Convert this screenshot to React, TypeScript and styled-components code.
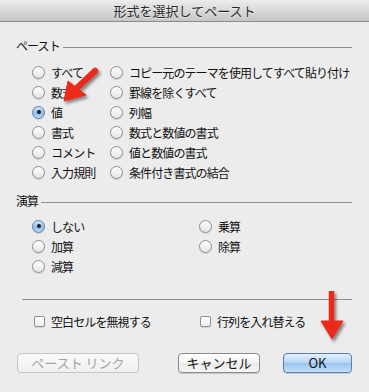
import React from 'react';
import styled, { createGlobalStyle } from 'styled-components';

const GlobalStyle = createGlobalStyle`
  html, body {
    margin: 0;
    padding: 0;
    background: #ececec;
  }
  body {
    font-family: "Noto Sans CJK JP", "Liberation Sans", sans-serif;
    color: #111;
  }
`;

interface Choice {
  label: string;
  checked?: boolean;
}

const pasteLeft: Choice[] = [
  { label: 'すべて' },
  { label: '数式' },
  { label: '値', checked: true },
  { label: '書式' },
  { label: 'コメント' },
  { label: '入力規則' },
];

const pasteRight: Choice[] = [
  { label: 'コピー元のテーマを使用してすべて貼り付け' },
  { label: '罫線を除くすべて' },
  { label: '列幅' },
  { label: '数式と数値の書式' },
  { label: '値と数値の書式' },
  { label: '条件付き書式の結合' },
];

const opsLeft: Choice[] = [
  { label: 'しない', checked: true },
  { label: '加算' },
  { label: '減算' },
];

const opsRight: Choice[] = [{ label: '乗算' }, { label: '除算' }];

const Window = styled.div`
  position: relative;
  width: 369px;
  height: 392px;
  overflow: hidden;
  background: #ececec;
`;

const TitleBar = styled.div`
  height: 21px;
  line-height: 21px;
  text-align: center;
  font-size: 13px;
  color: #2a2a2a;
  background: linear-gradient(#ececec, #c6c6c6);
  border-bottom: 1px solid #8c8c8c;
  text-shadow: 0 1px 0 rgba(255, 255, 255, 0.5);
`;

const Body = styled.div`
  padding: 16px 17px 0 16px;
  display: flex;
  flex-direction: column;
`;

const SectionHeader = styled.div<{ $gap?: number }>`
  display: flex;
  align-items: center;
  height: 14px;
  font-size: 12px;
  letter-spacing: -0.9px;
  margin-top: ${({ $gap }) => $gap ?? 0}px;
`;

const Rule = styled.div`
  flex: 1;
  height: 1px;
  background: #8f8f8f;
  margin: 5px 0 0 3px;
`;

const OptionGrid = styled.div<{ $left: number; $gap: number }>`
  display: grid;
  grid-template-columns: ${({ $left }) => $left}px 1fr;
  margin: ${({ $gap }) => $gap}px 0 0 16px;
`;

const Column = styled.div`
  display: flex;
  flex-direction: column;
`;

const Row = styled.label`
  display: flex;
  align-items: center;
  height: 20px;
  gap: 6px;
  font-size: 12px;
  letter-spacing: -0.9px;
  white-space: nowrap;
`;

const RadioDot = styled.span<{ $checked?: boolean }>`
  position: relative;
  width: 13px;
  height: 13px;
  flex: none;
  box-sizing: border-box;
  border-radius: 50%;
  border: 1px solid ${({ $checked }) => ($checked ? '#5d7ea8' : '#8e8e8e')};
  background: ${({ $checked }) =>
    $checked
      ? 'linear-gradient(#d5e6f8, #8ebbee 55%, #b8d6f6)'
      : 'linear-gradient(#ffffff, #f1f1f1 50%, #e4e4e4)'};
  box-shadow: 0 1px 1px rgba(0, 0, 0, 0.12);
  &::after {
    content: '';
    display: ${({ $checked }) => ($checked ? 'block' : 'none')};
    position: absolute;
    left: 3.5px;
    top: 3.5px;
    width: 4px;
    height: 4px;
    border-radius: 50%;
    background: #1a1a1a;
  }
`;

const CheckBox = styled.span`
  width: 11px;
  height: 11px;
  flex: none;
  box-sizing: border-box;
  border-radius: 2px;
  border: 1px solid #8e8e8e;
  background: linear-gradient(#ffffff, #ececec);
  box-shadow: 0 1px 1px rgba(0, 0, 0, 0.1);
`;

const Separator = styled.div`
  height: 1px;
  background: #8f8f8f;
  margin: 23px 0 0 6px;
`;

const CheckRow = styled.div`
  display: grid;
  grid-template-columns: 166px 1fr;
  margin: 11px 0 0 18px;
`;

const ButtonRow = styled.div`
  display: flex;
  align-items: center;
  margin-top: 22px;
  padding-left: 1px;
`;

const ButtonGroup = styled.div`
  display: flex;
  gap: 23px;
  margin-left: auto;
`;

const Button = styled.button<{ $width: number; $variant?: 'default' | 'primary' | 'disabled' }>`
  width: ${({ $width }) => $width}px;
  height: 20px;
  padding: 0;
  font-family: "Noto Sans CJK JP", "Liberation Sans", sans-serif;
  font-size: 13px;
  line-height: 18px;
  border-radius: 4px;
  box-sizing: border-box;
  color: ${({ $variant }) => ($variant === 'disabled' ? '#a3a3a3' : '#111')};
  border: 1px solid
    ${({ $variant }) =>
      $variant === 'primary' ? '#5a7db0' : $variant === 'disabled' ? '#c4c4c4' : '#8a8a8a'};
  background: ${({ $variant }) =>
    $variant === 'primary'
      ? 'linear-gradient(#e3effc, #b4d4f6 50%, #97c2f0 51%, #c6e0fb)'
      : $variant === 'disabled'
      ? 'linear-gradient(#fafafa, #f0f0f0)'
      : 'linear-gradient(#ffffff, #f3f3f3 50%, #e9e9e9 51%, #f7f7f7)'};
  box-shadow: ${({ $variant }) =>
    $variant === 'disabled' ? 'none' : '0 1px 1px rgba(0, 0, 0, 0.15)'};
`;

const Overlay = styled.svg`
  position: absolute;
  left: 0;
  top: 0;
  pointer-events: none;
`;

const RadioList: React.FC<{ items: Choice[] }> = ({ items }) => (
  <Column>
    {items.map((item) => (
      <Row key={item.label}>
        <RadioDot $checked={item.checked} />
        {item.label}
      </Row>
    ))}
  </Column>
);

const App: React.FC = () => {
  return (
    <Window>
      <GlobalStyle />
      <TitleBar>形式を選択してペースト</TitleBar>
      <Body>
        <SectionHeader>
          ペースト
          <Rule />
        </SectionHeader>
        <OptionGrid $left={78} $gap={10}>
          <RadioList items={pasteLeft} />
          <RadioList items={pasteRight} />
        </OptionGrid>

        <SectionHeader $gap={11}>
          演算
          <Rule />
        </SectionHeader>
        <OptionGrid $left={167} $gap={9}>
          <RadioList items={opsLeft} />
          <RadioList items={opsRight} />
        </OptionGrid>

        <Separator />
        <CheckRow>
          <Row>
            <CheckBox />
            空白セルを無視する
          </Row>
          <Row>
            <CheckBox />
            行列を入れ替える
          </Row>
        </CheckRow>

        <ButtonRow>
          <Button $width={122} $variant="disabled" disabled>
            ペースト リンク
          </Button>
          <ButtonGroup>
            <Button $width={82}>キャンセル</Button>
            <Button $width={69} $variant="primary">
              OK
            </Button>
          </ButtonGroup>
        </ButtonRow>
      </Body>

      <Overlay width={369} height={392} viewBox="0 0 369 392">
        <defs>
          <filter id="arrowShadow" x="-50%" y="-50%" width="200%" height="200%">
            <feDropShadow dx="2" dy="2.5" stdDeviation="1.6" floodColor="#000" floodOpacity="0.45" />
          </filter>
        </defs>
        <g fill="#ec2a1e" stroke="#ec2a1e" filter="url(#arrowShadow)">
          <line x1="95" y1="71" x2="77" y2="88" strokeWidth="6.5" strokeLinecap="round" />
          <polygon points="64,101 86,95 68,81" strokeWidth="1" strokeLinejoin="round" />
          <line x1="331.5" y1="291" x2="331.5" y2="323" strokeWidth="5.5" />
          <polygon points="321,321 343,321 332,339" strokeWidth="1" strokeLinejoin="round" />
        </g>
      </Overlay>
    </Window>
  );
};

export default App;
